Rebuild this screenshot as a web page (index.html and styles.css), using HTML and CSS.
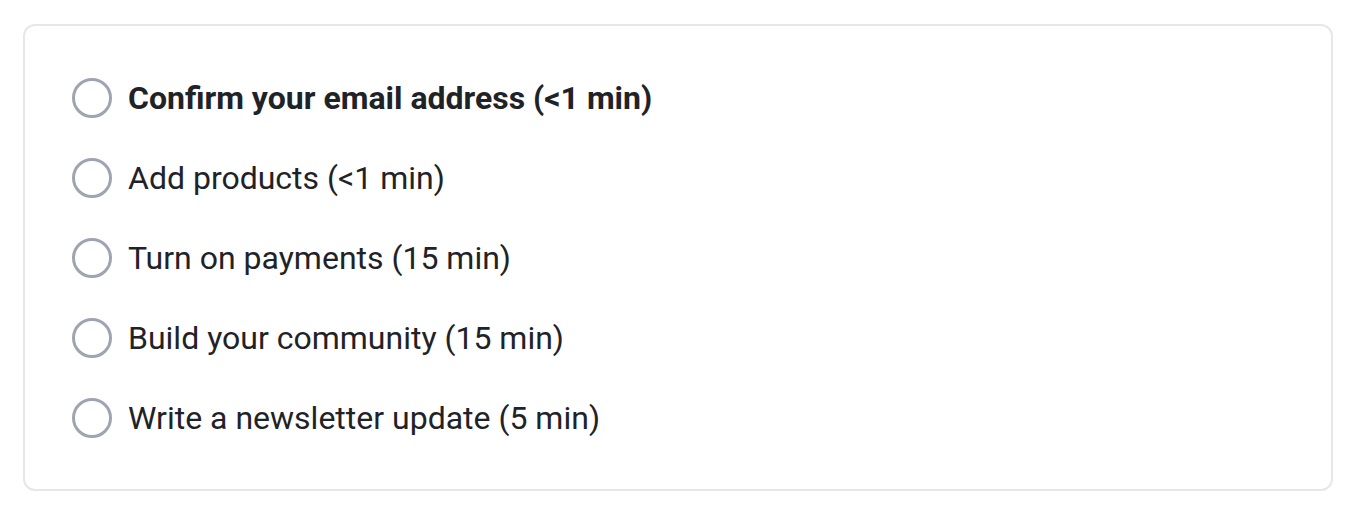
FILE: index.html
```html
<!DOCTYPE html>
<html>
<head>
<meta charset="utf-8">
<link rel="stylesheet" href="styles.css">
</head>
<body>
<div class="card">
  <ul class="steps">
    <li class="step step-current"><span class="circle"></span><span class="label">Confirm your email address (&lt;1 min)</span></li>
    <li class="step"><span class="circle"></span><span class="label">Add products (&lt;1 min)</span></li>
    <li class="step"><span class="circle"></span><span class="label">Turn on payments (15 min)</span></li>
    <li class="step"><span class="circle"></span><span class="label">Build your community (15 min)</span></li>
    <li class="step"><span class="circle"></span><span class="label">Write a newsletter update (5 min)</span></li>
  </ul>
</div>
</body>
</html>
```
FILE: styles.css
```css
html, body {
  margin: 0;
  padding: 0;
  background: #ffffff;
}
body {
  padding: 24px 23px 0 23px;
  font-family: Roboto, "Liberation Sans", sans-serif;
  color: #1f2328;
}
.card {
  box-sizing: border-box;
  width: 1310px;
  height: 467px;
  border: 2px solid #e6e7eb;
  border-radius: 12px;
  padding: 32px 0 0 47px;
}
.steps {
  list-style: none;
  margin: 0;
  padding: 0;
}
.step {
  display: flex;
  align-items: center;
  height: 80px;
  gap: 16px;
}
.circle {
  box-sizing: border-box;
  width: 40px;
  height: 40px;
  border: 3px solid #9ea4b0;
  border-radius: 50%;
  flex: none;
}
.label {
  font-size: 32px;
  line-height: 1;
}
.step-current .label {
  font-weight: 700;
}
```
